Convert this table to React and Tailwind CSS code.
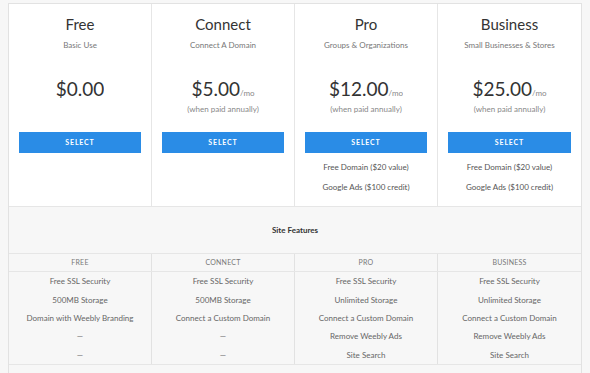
import React from "react";

const plans = [
  { name: "Free", sub: "Basic Use", price: "$0.00", mo: false, extras: [] },
  { name: "Connect", sub: "Connect A Domain", price: "$5.00", mo: true, extras: [] },
  { name: "Pro", sub: "Groups & Organizations", price: "$12.00", mo: true, extras: ["Free Domain ($20 value)", "Google Ads ($100 credit)"] },
  { name: "Business", sub: "Small Businesses & Stores", price: "$25.00", mo: true, extras: ["Free Domain ($20 value)", "Google Ads ($100 credit)"] },
];

const features = [
  ["Free SSL Security", "500MB Storage", "Domain with Weebly Branding", "—", "—"],
  ["Free SSL Security", "500MB Storage", "Connect a Custom Domain", "—", "—"],
  ["Free SSL Security", "Unlimited Storage", "Connect a Custom Domain", "Remove Weebly Ads", "Site Search"],
  ["Free SSL Security", "Unlimited Storage", "Connect a Custom Domain", "Remove Weebly Ads", "Site Search"],
];

const labels = ["FREE", "CONNECT", "PRO", "BUSINESS"];

export default function App() {
  return (
    <div className="w-[590px] h-[373px] overflow-hidden bg-[#f7f7f7] pt-[3px] pl-[8px]" style={{ fontFamily: "Lato, 'Open Sans', sans-serif" }}>
      <div className="w-[574px] border-l border-r border-t border-[#e2e2e2]">
        {/* Header */}
        <div className="grid grid-cols-4 bg-white border-b border-[#e6e6e6]">
          {plans.map((p, i) => (
            <div key={p.name} className={`flex flex-col items-center pt-[11px] pb-[13px] px-[10px] ${i < 3 ? "border-r border-[#e6e6e6]" : ""}`}>
              <div className="h-[18px] text-[15px] leading-[18px] text-[#333]">{p.name}</div>
              <div className="mt-[6px] h-[12px] text-[8px] leading-[12px] text-[#777]">{p.sub}</div>
              <div className="mt-[25px] h-[26px] overflow-hidden text-[19px] leading-[26px] text-[#333] whitespace-nowrap">
                <span>{p.price}</span>
                {p.mo && <span className="text-[8px] leading-[8px] text-[#888]">/mo</span>}
              </div>
              <div className="mt-[1px] h-[12px] text-[8px] leading-[12px] text-[#888]">{p.mo ? "(when paid annually)" : ""}</div>
              <div className="mt-[17px] w-full h-[21px] bg-[#2a8ce6] flex items-center justify-center text-white text-[7px] font-bold tracking-[0.12em]">
                SELECT
              </div>
              {p.extras.length === 0 && <div className="h-[40px]" />}
              {p.extras.map((e) => (
                <div key={e} className="mt-[8px] h-[12px] text-[8px] leading-[12px] text-[#555]">{e}</div>
              ))}
            </div>
          ))}
        </div>
        {/* Site features */}
        <div className="h-[47px] flex items-center justify-center text-[8px] font-bold text-[#333] border-b border-[#e6e6e6]">
          Site Features
        </div>
        <div className="grid grid-cols-4 border-b border-[#e6e6e6]">
          {labels.map((l, i) => (
            <div key={l} className={`h-[17px] flex items-center justify-center text-[7px] text-[#777] tracking-[0.03em] ${i < 3 ? "border-r border-[#e2e2e2]" : ""}`}>
              {l}
            </div>
          ))}
        </div>
        <div className="grid grid-cols-4 border-b border-[#e6e6e6]">
          {features.map((col, i) => (
            <div key={i} className={`flex flex-col ${i < 3 ? "border-r border-[#e2e2e2]" : ""}`}>
              {col.map((f, j) => (
                <div key={j} className="h-[18.4px] flex items-center justify-center text-[8px] text-[#666]">{f}</div>
              ))}
            </div>
          ))}
        </div>
        <div className="h-[20px]" />
      </div>
    </div>
  );
}
